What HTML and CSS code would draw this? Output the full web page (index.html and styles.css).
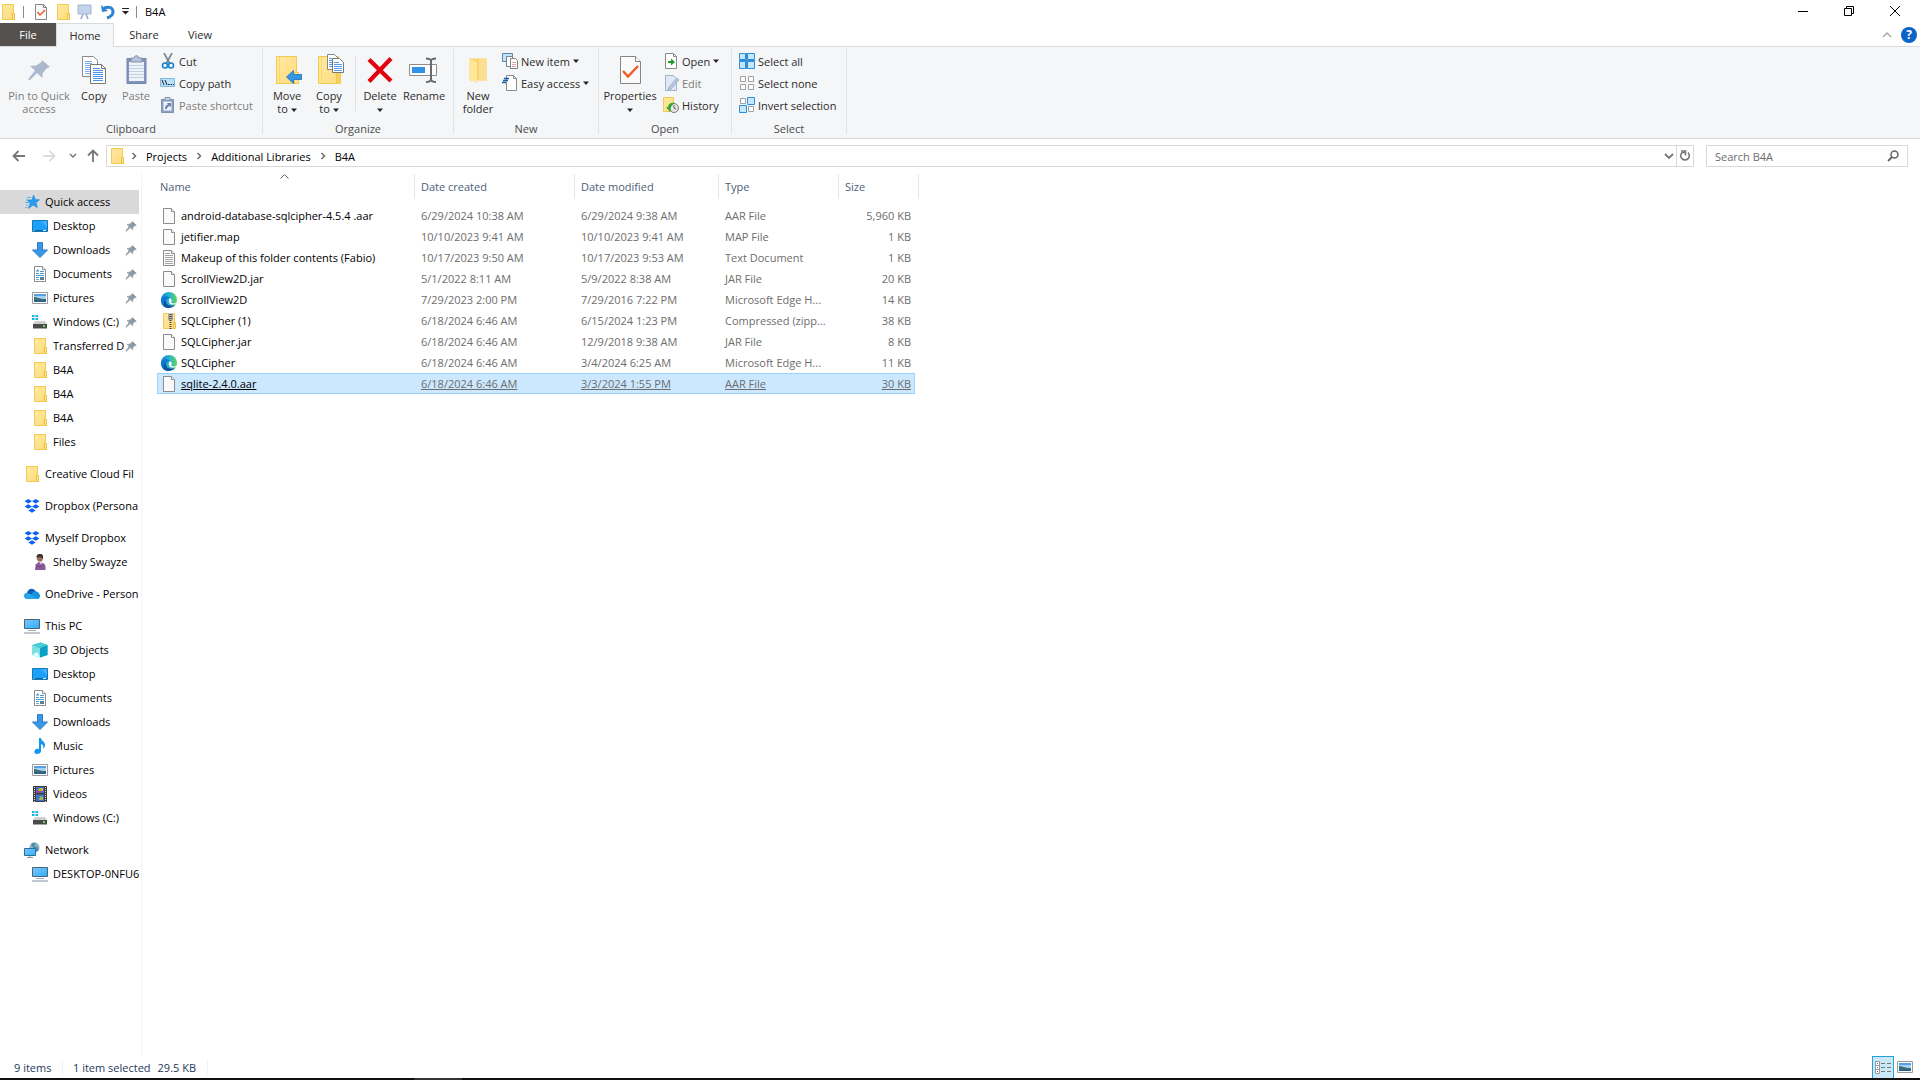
FILE: index.html
```html
<!DOCTYPE html>
<html lang="en">
<head>
<meta charset="utf-8">
<meta name="viewport" content="width=device-width, initial-scale=1">
<title>B4A</title>
<link rel="stylesheet" href="styles.css">
</head>
<body>
<svg class="defs" aria-hidden="true">
  <defs>
    <linearGradient id="g-edge" x1="0" y1="0" x2="1" y2="0"><stop offset="0" stop-color="#0c7fd8"/><stop offset=".5" stop-color="#27b4d4"/><stop offset="1" stop-color="#5fd35a"/></linearGradient>
    <linearGradient id="g-blue" x1="0" y1="0" x2="1" y2="1"><stop offset="0" stop-color="#7cc4fb"/><stop offset="1" stop-color="#2fb0fb"/></linearGradient>
    <linearGradient id="g-folder" x1="0" y1="0" x2="1" y2="1"><stop offset="0" stop-color="#ffe9a2"/><stop offset="1" stop-color="#ffdc7c"/></linearGradient>
  </defs>
  <symbol id="folder" viewBox="0 0 16 16"><path d="M2.500.5h11v15h-11z" fill="url(#g-folder)" stroke="#f1ca52"/><path d="M12.500 9.500h2v6h-2z" fill="#ffe9a2" stroke="#edc13f"/></symbol>
  <symbol id="file" viewBox="0 0 16 16"><path d="M2.500.5h8l3 3v12h-11z" fill="#fafafa" stroke="#8c8c8c"/><path d="M10.500.5v3h3" fill="#fff" stroke="#8c8c8c"/></symbol>
  <symbol id="textfile" viewBox="0 0 16 16"><path d="M2.500.5h8l3 3v12h-11z" fill="#fafafa" stroke="#8c8c8c"/><path d="M10.500.5v3h3" fill="#fff" stroke="#8c8c8c"/><path d="M4 3.500h5M4 5.500h8M4 7.500h8M4 9.500h8M4 11.500h8M4 13.500h8" stroke="#a5a5a5"/></symbol>
  <symbol id="edge" viewBox="0 0 16 16"><circle cx="8" cy="8" r="8" fill="url(#g-edge)"/><path d="M0 7c1-3 7-4 9-1-3 0-5 2-4 5 1 3 4 4 7 3-2 2-7 3-10 0C0 12 0 9 0 7z" fill="#0a78d0"/><path d="M5 8c-1 4 3 7 9 5-3 3-8 4-11 1-1-2 0-5 2-6z" fill="#124f9e"/><path d="M8.500 6.500c2 0 3 2 1.500 4 2 1.500 4 1 5.500-.3-.5 1.800-2.500 2.700-4.500 2.300-3-.5-4-4-2.500-6z" fill="#fff"/></symbol>
  <symbol id="zip" viewBox="0 0 16 16"><path d="M2.500.5h11v15h-11z" fill="url(#g-folder)" stroke="#f1ca52"/><path d="M12.500 9.500h2v6h-2z" fill="#ffe9a2" stroke="#edc13f"/><path d="M7.500 0h4v8h-4z" fill="#c9c9c9"/><path d="M8 1v6M11 1v6" stroke="#777"/><path d="M9.500 1v15" stroke="#444" stroke-width="2" stroke-dasharray="1 1"/></symbol>
  <symbol id="pin" viewBox="0 0 16 16"><path d="M10 2l5 5-2 .5-2.500 2.500-.3 3L7 10l-5.500 5L1 14.500 5.500 9 3 5.800l3-.3L9 3.500z" fill="#8e9aa5" stroke="#8e9aa5"/></symbol>
  <symbol id="quick" viewBox="0 0 16 16"><path d="M9.500 1l1.700 4.500 4.300.3-3.400 2.700 1.100 5L9 11l-4.500 3.500 1.600-5L3.500 6H8z" fill="#2a9df0" stroke="#1382d4" stroke-width=".6"/><path d="M3 3.500h4M2 6h2M1 8.500h4M2 11h2M1.500 13.500h2" stroke="#54b4ee"/></symbol>
  <symbol id="desktop" viewBox="0 0 16 16"><path d="M.5 2.500h15v11H.5z" fill="#1ea0fa" stroke="#1377b8"/><path d="M9 3h6v6z" fill="#3db0ff"/><path d="M1 12.500h14" stroke="#0a6aa8"/><path d="M1.500 12.500h1M11 12.500h3" stroke="#d9efff"/></symbol>
  <symbol id="download" viewBox="0 0 16 16"><path d="M5.500.5h5V8h5L8 15.500.5 8h5z" fill="#3b97e6" stroke="#2a7ec7"/></symbol>
  <symbol id="document" viewBox="0 0 16 16"><path d="M2.500.5h8l3 3v12h-11z" fill="#fff" stroke="#8a8f93"/><path d="M10.500.5v3h3" fill="#fff" stroke="#8a8f93"/><path d="M4 7.500h3M8 5.500h4M8 7.500h4M4 9.500h8M4 11.500h3" stroke="#389ccf"/><path d="M4 5.500h3L6 3z" fill="#3a7ca5"/><path d="M8 11h4v3H8z" fill="#58829c"/><path d="M4 13.500h3" stroke="#8aa"/></symbol>
  <symbol id="picture" viewBox="0 0 16 16"><path d="M.5 2.500h15v11H.5z" fill="#fff" stroke="#9a9a9a"/><path d="M2 4h12v8H2z" fill="#a5d3f7"/><path d="M2 4h12v2H2z" fill="#5a9ee6"/><path d="M2 7c3 0 5 2 12 2v3H2z" fill="#3f706f"/><path d="M2 10c4 1 8 0 12 0v2H2z" fill="#2e5f92"/></symbol>
  <symbol id="drive" viewBox="0 0 16 16"><path d="M0 1h2.500v2H0zM3.500 1H6v2H3.500zM0 4h2.500v2H0zM3.500 4H6v2H3.500z" fill="#13b5ea"/><path d="M3 7h10l2 3H1z" fill="#cfcfcf"/><path d="M1 10h14v4.500H1z" fill="#4a4a4a"/><path d="M11 12h2" stroke="#4be06a" stroke-width="2"/></symbol>
  <symbol id="dropbox" viewBox="0 0 16 16"><path d="M4.300 1L8 3.300 4.300 5.600.5 3.300zM11.700 1l3.800 2.300-3.800 2.300L8 3.300zM4.300 6.200L8 8.500l-3.700 2.300L.5 8.500zM11.700 6.200l3.800 2.300-3.800 2.300L8 8.500zM8 10.200l3.700 2.200L8 14.700l-3.700-2.300z" fill="#0b62fb"/></symbol>
  <symbol id="person" viewBox="0 0 16 16"><path d="M5 1c2-2 6-1 6 2 0 3-1 5-3 5S5 6 4.500 4z" fill="#9a705c"/><path d="M4.500 3C5-.5 10-1 11 2c0 2 0 3-.5 3C9 2 7 4 4.500 3z" fill="#3c3230"/><path d="M3 16c0-3 1-7 4-8l3 1c3 0 4 3 3.500 7z" fill="#8c5a9c"/><path d="M7 7l3 1-1 3z" fill="#e6e0e8"/><path d="M4 10c0 3 3 3 6 2" fill="none" stroke="#694078"/></symbol>
  <symbol id="onedrive" viewBox="0 0 16 16"><path d="M3 7C4 2 10 1 12 6l-5 5H1C-.5 9 1 7 3 7z" fill="#0b5fb5"/><path d="M9 6c3-2 7 1 7 4 0 2-1 3-3 3H4z" fill="#1493e0"/><path d="M1 7.500c4-1 7 1 12 5.500H3C-.5 13-.5 9 1 7.500z" fill="#28a8ea"/></symbol>
  <symbol id="pc" viewBox="0 0 16 16"><path d="M.5 1.500h15v9H.5z" fill="url(#g-blue)" stroke="#4a6478"/><path d="M4 12.500h8" stroke="#9fb0bd"/><path d="M0 15h16" stroke="#8394a5"/></symbol>
  <symbol id="cube" viewBox="0 0 16 16"><path d="M.5 3l8-2.500L15.500 3v10L8 15.500.5 13z" fill="#27bccb"/><path d="M.5 3L8 6v9.500L.5 13z" fill="#7ce0e0"/><path d="M8 6l7.500-3v10L8 15.500z" fill="#0ea0c4"/><path d="M.5 3l8-2.500L15.500 3 8 6z" fill="#49ccd4"/><path d="M.5 13L5 10l3 5.500z" fill="#e8ffff"/></symbol>
  <symbol id="music" viewBox="0 0 16 16"><path d="M7 0h2c0 3 4 3 4 7 0 2-1 3-2 4 1-3 0-4-2-5v7c0 2-2 3-4 3s-3-1-2.500-3S5 10.500 7 11z" fill="#1098f0"/></symbol>
  <symbol id="video" viewBox="0 0 16 16"><path d="M1 0h14v16H1z" fill="#3b3b3b"/><path d="M2.500 1v15M13.500 1v15" stroke="#ddd" stroke-dasharray="1 1"/><path d="M4 1h8v6H4zM4 8.500h8V15H4z" fill="#3b76cc"/><path d="M7 2h4v3H6z" fill="#d8a833"/><path d="M4 5h5v2H4z" fill="#a7418d"/><path d="M8 10l3 1v3H7z" fill="#a4b641"/></symbol>
  <symbol id="network" viewBox="0 0 16 16"><circle cx="10.500" cy="5.500" r="5" fill="#8fb2c4"/><path d="M7 2c2-2 4-1 5-1L10 4l3 1 2 3-3 2z" fill="#4f89a8"/><path d="M.5 6.500h11v7H.5z" fill="url(#g-blue)" stroke="#286fa0"/><path d="M3 15.500h6M6 14v1" stroke="#8394a5"/></symbol>
  <symbol id="checkdoc" viewBox="0 0 16 16"><path d="M2.500.5h8l3 3v12h-11z" fill="#fafafa" stroke="#858585"/><path d="M10.500.5v3h3" fill="none" stroke="#858585"/><path d="M4.500 8l2.500 3 5-5" fill="none" stroke="#ec5a24" stroke-width="1.500"/></symbol>
  <symbol id="chev-r" viewBox="0 0 8 8"><path d="M2.500 1l3 3-3 3" fill="none" stroke="#6d6d6d" stroke-width="1.500"/></symbol>
  <symbol id="caret" viewBox="0 0 6 4"><path d="M0 .5h6L3 4z" fill="#222"/></symbol>
  <symbol id="copy" viewBox="0 0 32 32"><path d="M4.500 2.500h11l4 4v16h-15z" fill="#fff" stroke="#8a8a8a"/><path d="M7 7.500h7M7 9.500h7M7 11.500h7M7 13.500h7M7 15.500h7M7 17.500h7M7 19.500h7" stroke="#79aef0"/><path d="M12.500 10.500h11l4 4v15h-15z" fill="#fff" stroke="#777"/><path d="M23.500 10.500v4h4" fill="none" stroke="#777"/><path d="M15 14.500h7M15 16.500h10M15 18.500h10M15 20.500h10M15 22.500h10M15 24.500h10M15 26.500h10" stroke="#4b92f0"/></symbol>
</svg>

<header class="titlebar">
  <div class="quickbar">
    <svg class="ic"><use href="#folder"/></svg>
    <span class="bar"></span>
    <button class="qbtn" aria-label="Properties"><svg class="ic"><use href="#checkdoc"/></svg></button>
    <button class="qbtn" aria-label="New folder"><svg class="ic"><use href="#folder"/></svg></button>
    <button class="qbtn" aria-label="Slide show"><svg class="ic" viewBox="0 0 16 16"><path d="M1 1h13v9H1z" fill="#c3d3ea" stroke="#a3b5d1"/><path d="M6 10l-2 5M9 10l2 5" stroke="#95a8c5" stroke-width="1.500"/></svg></button>
    <button class="qbtn" aria-label="Undo"><svg class="ic" viewBox="0 0 16 16"><path d="M5 4c6-2 9 0 9 4 0 3-3 5-6 6" fill="none" stroke="#2b83d2" stroke-width="3"/><path d="M2 1l1 7 6-1z" fill="#2b83d2"/></svg></button>
    <button class="qbtn small" aria-label="Customize"><svg viewBox="0 0 7 7" width="7" height="7"><path d="M0 .5h7" stroke="#222"/><path d="M0 3h7L3.500 6.500z" fill="#222"/></svg></button>
    <span class="bar"></span>
  </div>
  <h1 class="title">B4A</h1>
  <div class="winbtns">
    <button aria-label="Minimize"><svg viewBox="0 0 10 10" width="10" height="10"><path d="M0 5.500h10" stroke="#000"/></svg></button>
    <button aria-label="Restore"><svg viewBox="0 0 10 10" width="10" height="10"><path d="M.5 2.500h7v7h-7zM2.500 2.500v-2h7v7h-2" fill="none" stroke="#000"/></svg></button>
    <button aria-label="Close"><svg viewBox="0 0 10 10" width="10" height="10"><path d="M0 0l10 10M10 0L0 10" stroke="#000"/></svg></button>
  </div>
</header>

<nav class="tabs">
  <button class="tab file">File</button>
  <button class="tab home">Home</button>
  <button class="tab share">Share</button>
  <button class="tab view">View</button>
  <div class="tabtools">
    <button aria-label="Collapse ribbon"><svg viewBox="0 0 10 6" width="10" height="6"><path d="M1 5l4-4 4 4" fill="none" stroke="#a5a5a5" stroke-width="1.300"/></svg></button>
    <button class="help" aria-label="Help">?</button>
  </div>
</nav>

<section class="ribbon">
  <div class="group clipboard">
    <div class="tools">
      <button class="big pinbtn off"><svg class="bi" viewBox="0 0 32 32"><path d="M19 6l8 7-3.500 1.500-4 5V24l-5.500-5L7 26l-2-.5 7-9-5-4.500 6-.5 5-3z" fill="#a9b8cd"/></svg><span>Pin to Quick<br>access</span></button>
      <button class="big"><svg class="bi"><use href="#copy"/></svg><span>Copy</span></button>
      <button class="big off"><svg class="bi" viewBox="0 0 32 32"><path d="M7 4.500h19v25H7z" fill="#8195bb" stroke="#7486aa"/><path d="M9 8h15v19H9z" fill="#eef3fa"/><path d="M9 11.500h15M9 14.500h15M9 17.500h15M9 20.500h15M9 23.500h15" stroke="#c2d0e4"/><path d="M11 4h3c0-3 5-3 5 0h3v4H11z" fill="#b7c3d5" stroke="#8393ae"/></svg><span>Paste</span></button>
      <div class="smalls">
        <button class="sm"><svg class="ic" viewBox="0 0 16 16"><path d="M4 0l6 11M12 0L6 11" stroke="#75808c" stroke-width="1.600"/><circle cx="5" cy="12.500" r="2.500" fill="none" stroke="#1885cf" stroke-width="1.600"/><circle cx="11" cy="12.500" r="2.500" fill="none" stroke="#1885cf" stroke-width="1.600"/></svg>Cut</button>
        <button class="sm"><svg class="ic" viewBox="0 0 16 16"><path d="M.5 3.500h14v8H.5z" fill="#b9e1fb" stroke="#7db8dd"/><path d="M2 5l2 5M5 5l2 5M8 9.500h1.500M10.500 9.500H12M13 9.500h1" stroke="#222"/></svg>Copy path</button>
        <button class="sm off"><svg class="ic" viewBox="0 0 16 16"><path d="M1.500 2.500h12v13h-12z" fill="#8da0c2" stroke="#7e90b2"/><path d="M3.500 4.500h8v9h-8z" fill="#eef3fa"/><path d="M5 .5h5v3H5z" fill="#c3cddd" stroke="#8696b0"/><path d="M5 12c0-3 1-4 3-4.500L7 6h4v4L9.500 9C8 9.500 7 10.500 7 12z" fill="#6d84b0"/></svg>Paste shortcut</button>
      </div>
    </div>
    <h2>Clipboard</h2>
  </div>
  <div class="group organize">
    <div class="tools">
      <button class="big"><svg class="bi" viewBox="0 0 32 32"><path d="M5.500 2.500h20v27h-20z" fill="url(#g-folder)" stroke="#efc952"/><path d="M8.500 3v26" stroke="#f7d878"/><path d="M23.500 18.500h4v11h-4z" fill="#ffe9a2" stroke="#efc952"/><path d="M15.500 23l7-6.500v4h8v5h-8v4z" fill="#3896e6" stroke="#2b7fc8"/></svg><span>Move<br>to <svg class="ct"><use href="#caret"/></svg></span></button>
      <button class="big"><svg class="bi" viewBox="0 0 32 32"><path d="M5.500 2.500h20v27h-20z" fill="url(#g-folder)" stroke="#efc952"/><path d="M8.500 3v26" stroke="#f7d878"/><path d="M23.500 18.500h4v11h-4z" fill="#f7cf5c" stroke="#efc952"/><path d="M14.500.5h7l3 3v12h-10z" fill="#fff" stroke="#888"/><path d="M19.500 4.500h7l4 4v10h-11z" fill="#fff" stroke="#777"/><path d="M21 8.500h5M21 10.500h8M21 12.500h8M21 14.500h8M21 16.500h8M16 4.500h3M16 6.500h3M16 8.500h3M16 10.500h3M16 12.500h3" stroke="#559bf0"/></svg><span>Copy<br>to <svg class="ct"><use href="#caret"/></svg></span></button>
      <i class="split"></i>
      <button class="big"><svg class="bi" viewBox="0 0 32 32"><path d="M5 5.500L27 27M27 4.500L5 27.500" stroke="#e3000f" stroke-width="4.200"/></svg><span>Delete<br><svg class="ct"><use href="#caret"/></svg></span></button>
      <button class="big rename"><svg class="bi" viewBox="0 0 32 32"><path d="M1.500 10.500h27v11h-27z" fill="#fff" stroke="#8c8c8c"/><path d="M4 13h13v6H4z" fill="#2f93e8"/><path d="M18 4.500c3 0 5 .5 5 2.500v18c0 2-2 3-5 3M28 4.500c-3 0-5 .5-5 2.500v18c0 2 2 3 5 3" fill="none" stroke="#6b6b6b" stroke-width="2"/></svg><span>Rename</span></button>
    </div>
    <h2>Organize</h2>
  </div>
  <div class="group new">
    <div class="tools">
      <button class="big"><svg class="bi" viewBox="0 0 32 32"><path d="M8 4.500h17v22H8z" fill="#fbd36b"/><path d="M17 4.500h8v22h-8z" fill="#fbe094"/><path d="M7 4.500l8 4v21L7 25z" fill="#ffe69a"/></svg><span>New<br>folder</span></button>
      <div class="smalls">
        <button class="sm"><svg class="ic" viewBox="0 0 16 16"><path d="M.5.5h10v8H.5z" fill="#c5e2f6" stroke="#5787a6"/><path d="M4.500 3.500h6v10h-6z" fill="#fff" stroke="#6f8795"/><path d="M8.500 5.500h5l2 2v8h-7z" fill="#fff" stroke="#808080"/><path d="M10 9.500h4M10 11.500h4M10 13.500h4" stroke="#e0a5a5"/></svg>New item <svg class="ct"><use href="#caret"/></svg></button>
        <button class="sm"><svg class="ic" viewBox="0 0 16 16"><path d="M4.500.5h7l3 3v12h-10z" fill="#fff" stroke="#8a8a8a"/><path d="M11.500.5v3h3" fill="none" stroke="#8a8a8a"/><path d="M2 3.500h5M1 5.500h5M0 7.500h4" stroke="#1b62ab" stroke-width="1.300"/></svg>Easy access <svg class="ct"><use href="#caret"/></svg></button>
      </div>
    </div>
    <h2>New</h2>
  </div>
  <div class="group open">
    <div class="tools">
      <button class="big props"><svg class="bi" viewBox="0 0 32 32"><path d="M6.500 2.500h15l5 5v22h-20z" fill="#fafafa" stroke="#858585"/><path d="M21.500 2.500v5h5" fill="#fff" stroke="#858585"/><path d="M9 17l5 5.500L24 12" fill="none" stroke="#f0591f" stroke-width="2.400"/></svg><span>Properties<br><svg class="ct"><use href="#caret"/></svg></span></button>
      <div class="smalls">
        <button class="sm"><svg class="ic" viewBox="0 0 16 16"><path d="M2.500.5h8l3 3v12h-11z" fill="#fff" stroke="#8a8a8a"/><path d="M10.500.5v3h3" fill="none" stroke="#8a8a8a"/><path d="M5 8h3V5.500L12 9l-4 3.500V10H5z" fill="#1b9e26"/></svg>Open <svg class="ct"><use href="#caret"/></svg></button>
        <button class="sm off"><svg class="ic" viewBox="0 0 16 16"><path d="M2.500.5h8l3 3v12h-11z" fill="#dfe8f4" stroke="#a3b3cd"/><path d="M14 3l2 2-8 9-3 1 1-3z" fill="#b5c6e0" stroke="#8fa4c6" stroke-width=".7"/></svg>Edit</button>
        <button class="sm"><svg class="ic" viewBox="0 0 16 16"><path d="M.5.5h10v14H.5z" fill="url(#g-folder)" stroke="#f1ca52"/><circle cx="11" cy="11" r="4.500" fill="#e3e3e3" stroke="#7b7b7b"/><path d="M11 8v3l2 1" fill="none" stroke="#666"/><path d="M3 10l4 5 1-2c-1-3 1-5 4-7-4-1-7 1-7 4z" fill="#35a839"/></svg>History</button>
      </div>
    </div>
    <h2>Open</h2>
  </div>
  <div class="group select">
    <div class="tools">
      <div class="smalls">
        <button class="sm"><svg class="ic" viewBox="0 0 16 16"><path d="M.5.5h6v6h-6zM8.500.5h7v6h-7zM.5 8.500h6v7h-6zM8.500 8.500h7v7h-7z" fill="#c6e6fb" stroke="#2d8fdc"/><path d="M7.500 0v16M0 7.500h16" stroke="#2d8fdc"/></svg>Select all</button>
        <button class="sm"><svg class="ic" viewBox="0 0 16 16"><path d="M1.500 1.500h5v5h-5zM9.500 1.500h5v5h-5zM1.500 9.500h5v5h-5zM9.500 9.500h5v5h-5z" fill="#fff" stroke="#a0a0a0"/></svg>Select none</button>
        <button class="sm"><svg class="ic" viewBox="0 0 16 16"><path d="M1.500 1.500h5v5h-5zM9.500 9.500h5v5h-5z" fill="#fff" stroke="#a0a0a0"/><path d="M8.500.5h7v7h-7zM.5 8.500h7v7h-7z" fill="#c6e6fb" stroke="#2d8fdc"/></svg>Invert selection</button>
      </div>
    </div>
    <h2>Select</h2>
  </div>
</section>

<section class="addressrow">
  <div class="navbtns">
    <button aria-label="Back"><svg viewBox="0 0 14 12" width="14" height="12"><path d="M13 6H2M6.500 1L1.500 6l5 5" fill="none" stroke="#777" stroke-width="1.800"/></svg></button>
    <button aria-label="Forward"><svg viewBox="0 0 14 12" width="14" height="12"><path d="M1 6h11M7.500 1l5 5-5 5" fill="none" stroke="#d5d5d5" stroke-width="1.500"/></svg></button>
    <button class="recent" aria-label="Recent locations"><svg viewBox="0 0 8 6" width="8" height="6"><path d="M1 1l3 3 3-3" fill="none" stroke="#777" stroke-width="1.500"/></svg></button>
    <button class="up" aria-label="Up"><svg viewBox="0 0 12 14" width="12" height="14"><path d="M6 13V2M1 6.500L6 1.500l5 5" fill="none" stroke="#777" stroke-width="1.800"/></svg></button>
  </div>
  <div class="address">
    <svg class="ic"><use href="#folder"/></svg>
    <svg class="cr"><use href="#chev-r"/></svg><a href="#">Projects</a>
    <svg class="cr"><use href="#chev-r"/></svg><a href="#">Additional Libraries</a>
    <svg class="cr"><use href="#chev-r"/></svg><a href="#">B4A</a>
    <button class="history" aria-label="Previous locations"><svg viewBox="0 0 10 8" width="10" height="8"><path d="M1 2l4 4 4-4" fill="none" stroke="#777" stroke-width="1.800"/></svg></button>
    <button class="refresh" aria-label="Refresh"><svg viewBox="0 0 12 12" width="12" height="12"><path d="M9 2.500a4.300 4.300 0 1 1-6 0h3.500" fill="none" stroke="#777" stroke-width="1.600"/><path d="M2 1h4.500v4.500" fill="none" stroke="#777" stroke-width="1.600"/></svg></button>
  </div>
  <form class="search">
    <input type="search" aria-label="Search B4A" placeholder="Search B4A">
    <button aria-label="Search"><svg viewBox="0 0 12 12" width="12" height="12"><circle cx="7.500" cy="4.500" r="3.500" fill="none" stroke="#666" stroke-width="1.500"/><path d="M5 7l-4 4" stroke="#666" stroke-width="1.800"/></svg></button>
  </form>
</section>

<main class="body">
  <nav class="side">
    <ul>
      <li><a class="root current" href="#"><svg class="ic"><use href="#quick"/></svg><span>Quick access</span></a></li>
      <li><a href="#"><svg class="ic"><use href="#desktop"/></svg><span>Desktop</span><svg class="pin"><use href="#pin"/></svg></a></li>
      <li><a href="#"><svg class="ic"><use href="#download"/></svg><span>Downloads</span><svg class="pin"><use href="#pin"/></svg></a></li>
      <li><a href="#"><svg class="ic"><use href="#document"/></svg><span>Documents</span><svg class="pin"><use href="#pin"/></svg></a></li>
      <li><a href="#"><svg class="ic"><use href="#picture"/></svg><span>Pictures</span><svg class="pin"><use href="#pin"/></svg></a></li>
      <li><a href="#"><svg class="ic"><use href="#drive"/></svg><span>Windows (C:)</span><svg class="pin"><use href="#pin"/></svg></a></li>
      <li><a href="#"><svg class="ic"><use href="#folder"/></svg><span>Transferred D</span><svg class="pin"><use href="#pin"/></svg></a></li>
      <li><a href="#"><svg class="ic"><use href="#folder"/></svg><span>B4A</span></a></li>
      <li><a href="#"><svg class="ic"><use href="#folder"/></svg><span>B4A</span></a></li>
      <li><a href="#"><svg class="ic"><use href="#folder"/></svg><span>B4A</span></a></li>
      <li><a href="#"><svg class="ic"><use href="#folder"/></svg><span>Files</span></a></li>
    </ul>
    <ul>
      <li><a class="root" href="#"><svg class="ic"><use href="#folder"/></svg><span>Creative Cloud Fil</span></a></li>
    </ul>
    <ul>
      <li><a class="root" href="#"><svg class="ic"><use href="#dropbox"/></svg><span>Dropbox (Persona</span></a></li>
    </ul>
    <ul>
      <li><a class="root" href="#"><svg class="ic"><use href="#dropbox"/></svg><span>Myself Dropbox</span></a></li>
      <li><a href="#"><svg class="ic"><use href="#person"/></svg><span>Shelby Swayze</span></a></li>
    </ul>
    <ul>
      <li><a class="root" href="#"><svg class="ic"><use href="#onedrive"/></svg><span>OneDrive - Person</span></a></li>
    </ul>
    <ul>
      <li><a class="root" href="#"><svg class="ic"><use href="#pc"/></svg><span>This PC</span></a></li>
      <li><a href="#"><svg class="ic"><use href="#cube"/></svg><span>3D Objects</span></a></li>
      <li><a href="#"><svg class="ic"><use href="#desktop"/></svg><span>Desktop</span></a></li>
      <li><a href="#"><svg class="ic"><use href="#document"/></svg><span>Documents</span></a></li>
      <li><a href="#"><svg class="ic"><use href="#download"/></svg><span>Downloads</span></a></li>
      <li><a href="#"><svg class="ic"><use href="#music"/></svg><span>Music</span></a></li>
      <li><a href="#"><svg class="ic"><use href="#picture"/></svg><span>Pictures</span></a></li>
      <li><a href="#"><svg class="ic"><use href="#video"/></svg><span>Videos</span></a></li>
      <li><a href="#"><svg class="ic"><use href="#drive"/></svg><span>Windows (C:)</span></a></li>
    </ul>
    <ul>
      <li><a class="root" href="#"><svg class="ic"><use href="#network"/></svg><span>Network</span></a></li>
      <li><a href="#"><svg class="ic"><use href="#pc"/></svg><span>DESKTOP-0NFU6</span></a></li>
    </ul>
  </nav>
  <section class="files">
    <table>
      <colgroup><col class="c-name"><col class="c-created"><col class="c-modified"><col class="c-type"><col class="c-size"></colgroup>
      <thead>
        <tr><th class="sorted">Name<svg class="sort" viewBox="0 0 9 5"><path d="M.5 4.500l4-4 4 4" fill="none" stroke="#666"/></svg></th><th>Date created</th><th>Date modified</th><th>Type</th><th>Size</th></tr>
      </thead>
      <tbody>
        <tr><td><svg class="ic"><use href="#file"/></svg>android-database-sqlcipher-4.5.4 .aar</td><td>6/29/2024 10:38 AM</td><td>6/29/2024 9:38 AM</td><td>AAR File</td><td>5,960 KB</td></tr>
        <tr><td><svg class="ic"><use href="#file"/></svg>jetifier.map</td><td>10/10/2023 9:41 AM</td><td>10/10/2023 9:41 AM</td><td>MAP File</td><td>1 KB</td></tr>
        <tr><td><svg class="ic"><use href="#textfile"/></svg>Makeup of this folder contents (Fabio)</td><td>10/17/2023 9:50 AM</td><td>10/17/2023 9:53 AM</td><td>Text Document</td><td>1 KB</td></tr>
        <tr><td><svg class="ic"><use href="#file"/></svg>ScrollView2D.jar</td><td>5/1/2022 8:11 AM</td><td>5/9/2022 8:38 AM</td><td>JAR File</td><td>20 KB</td></tr>
        <tr><td><svg class="ic"><use href="#edge"/></svg>ScrollView2D</td><td>7/29/2023 2:00 PM</td><td>7/29/2016 7:22 PM</td><td>Microsoft Edge H...</td><td>14 KB</td></tr>
        <tr><td><svg class="ic"><use href="#zip"/></svg>SQLCipher (1)</td><td>6/18/2024 6:46 AM</td><td>6/15/2024 1:23 PM</td><td>Compressed (zipp...</td><td>38 KB</td></tr>
        <tr><td><svg class="ic"><use href="#file"/></svg>SQLCipher.jar</td><td>6/18/2024 6:46 AM</td><td>12/9/2018 9:38 AM</td><td>JAR File</td><td>8 KB</td></tr>
        <tr><td><svg class="ic"><use href="#edge"/></svg>SQLCipher</td><td>6/18/2024 6:46 AM</td><td>3/4/2024 6:25 AM</td><td>Microsoft Edge H...</td><td>11 KB</td></tr>
        <tr class="selected"><td><svg class="ic"><use href="#file"/></svg><u>sqlite-2.4.0.aar</u></td><td><u>6/18/2024 6:46 AM</u></td><td><u>3/3/2024 1:55 PM</u></td><td><u>AAR File</u></td><td><u>30 KB</u></td></tr>
      </tbody>
    </table>
  </section>
</main>

<footer class="status">
  <span class="count">9 items</span>
  <span class="sel">1 item selected</span>
  <span class="size">29.5 KB</span>
  <div class="views">
    <button class="on" aria-label="Details view"><svg viewBox="0 0 16 14" width="16" height="14"><path d="M.5.5h4v12h-4zM.5 4.500h4M.5 8.500h4" fill="#fff" stroke="#999"/><path d="M2 2.500h1M2 6.500h1" stroke="#3c82c8"/><path d="M2 10.500h1" stroke="#c33"/><path d="M6 2.500h4M12 2.500h4M6 6.500h4M12 6.500h4M6 10.500h4M12 10.500h4" stroke="#777"/></svg></button>
    <button aria-label="Large icons view"><svg class="ic"><use href="#picture"/></svg></button>
  </div>
</footer>
<div class="taskbar"><span></span></div>
</body>
</html>
```
FILE: styles.css
```css
* { box-sizing: border-box; }
html, body { margin: 0; }
body {
  display: flex;
  flex-direction: column;
  min-height: 100vh;
  background: #fff;
  color: #000;
  font-family: "Open Sans", "Noto Sans", sans-serif;
  font-size: 11px;
  line-height: 13px;
}
button {
  display: flex;
  align-items: center;
  justify-content: center;
  margin: 0;
  padding: 0;
  border: 0;
  background: none;
  color: inherit;
  font: inherit;
}
a { color: inherit; text-decoration: none; }
h1, h2 { margin: 0; font-size: inherit; font-weight: 400; }
svg { display: block; flex: none; }
.defs { position: absolute; width: 0; height: 0; }
.ic { width: 16px; height: 16px; }

/* Title bar */
.titlebar { display: flex; align-items: center; height: 23px; }
.quickbar { display: flex; align-items: center; gap: 6px; }
.bar { width: 1px; height: 12px; margin: 0 3px 0 1px; background: #8c8c8c; }
.qbtn { width: 16px; height: 16px; }
.qbtn.small { width: 8px; }
.title { flex: 1; padding-left: 5px; }
.winbtns { display: flex; height: 100%; padding-right: 2px; }
.winbtns button { width: 46px; height: 21px; }

/* Tabs */
.tabs { display: flex; height: 24px; border-bottom: 1px solid #dadbdc; color: #2b2b2b; }
.tab { height: 23px; }
.file { width: 56px; background: #54504e; color: #fff; }
.home { width: 58px; height: 24px; border: 1px solid #dadbdc; border-bottom: 0; background: #f5f6f7; }
.share { width: 60px; }
.view { width: 52px; }
.tabtools { display: flex; flex: 1; align-items: center; justify-content: flex-end; gap: 9px; padding-right: 3px; }
.help { width: 16px; height: 16px; border-radius: 8px; background: #0a64c8; color: #fff; font-size: 12px; font-weight: 700; }

/* Ribbon */
.ribbon { display: flex; height: 92px; padding: 2px 0 4px; border-bottom: 1px solid #dadbdc; background: #f5f6f7; color: #2b2b2b; }
.group { display: flex; flex-direction: column; justify-content: space-between; border-right: 1px solid #e2e3e4; }
.group h2 { text-align: center; line-height: 10px; color: #4a4a4a; }
.tools { display: flex; }
.clipboard { width: 263px; }
.clipboard .tools { padding-left: 5px; }
.organize { width: 191px; }
.organize .tools { padding-left: 3px; }
.new { width: 145px; }
.new .tools { padding-left: 3px; }
.open { width: 133px; }
.open .tools { padding-left: 5px; }
.select { width: 115px; }
.select .tools { padding-left: 4px; }
.big { flex-direction: column; justify-content: flex-start; width: 42px; padding-top: 5px; white-space: nowrap; }
.bi { width: 32px; height: 32px; margin-bottom: 3px; }
.pinbtn { width: 68px; }
.rename { width: 46px; }
.props { width: 52px; margin-right: 4px; }
.off { color: #7d7d7d; }
.smalls { padding: 1px 0 0 3px; }
.sm { justify-content: flex-start; gap: 3px; height: 22px; white-space: nowrap; }
.ct { display: inline-block; width: 6px; height: 4px; vertical-align: middle; }
.split { width: 1px; height: 55px; margin: 7px 3px 0 5px; background: #dfe0e1; }

/* Address row */
.addressrow { display: flex; align-items: center; height: 34px; padding: 0 12px 0 12px; }
.navbtns { display: flex; align-items: center; gap: 16px; width: 94px; }
.recent { width: 8px; margin-left: -3px; }
.up { margin-left: -6px; }
.address { display: flex; flex: 1; align-items: center; height: 22px; margin-right: 12px; padding-left: 2px; border: 1px solid #d9d9d9; }
.address .ic { margin-right: -2px; }
.cr { width: 8px; height: 8px; margin: 0 8px 0 7px; }
.address a { padding-right: 1px; }
.history { width: 14px; height: 20px; margin-left: auto; }
.refresh { width: 17px; height: 20px; border-left: 1px solid #d9d9d9; }
.search { display: flex; align-items: center; width: 202px; height: 22px; margin: 0; padding: 0 8px; border: 1px solid #d9d9d9; }
.search input { flex: 1; min-width: 0; padding: 0; border: 0; outline: 0; background: none; font: inherit; }
.search input::placeholder { color: #6d6d6d; opacity: 1; }

/* Navigation pane */
.body { display: flex; flex: 1; }
.side { width: 142px; padding: 17px 2px 0 0; border-right: 1px solid #f3f3f3; }
.side ul { margin: 0 0 8px; padding: 0; list-style: none; }
.side a { display: flex; align-items: center; gap: 5px; height: 24px; padding-left: 32px; overflow: hidden; white-space: nowrap; }
.side .root { padding-left: 24px; }
.side .current { background: #d9d9d9; }
.side span { flex: 1; min-width: 0; line-height: 18px; }
.pin { width: 12px; height: 12px; margin-right: 2px; }
.side span:not(:last-child) { margin-right: -3px; }

/* File list */
.files { flex: 1; padding: 1px 0 0 15px; }
table { width: 758px; border-collapse: separate; border-spacing: 0; table-layout: fixed; }
.c-name { width: 258px; }
.c-created { width: 160px; }
.c-modified { width: 144px; }
.c-type { width: 120px; }
th { position: relative; height: 25px; padding: 0 6px; border-right: 1px solid #e5e5e5; color: #4c607a; font-weight: 400; text-align: left; }
th:first-child { padding-left: 3px; }
th:last-child { border-right: 0; }
th:last-child::after { content: ""; position: absolute; top: 0; right: -4px; width: 1px; height: 25px; background: #e5e5e5; }
.sort { position: absolute; top: 0; left: 123px; width: 9px; height: 5px; }
thead::after { content: ""; display: block; height: 6px; }
td { height: 21px; padding: 0 4px 0 6px; color: #6d6d6d; white-space: nowrap; }
td:first-child { padding-left: 4px; color: #000; }
td .ic { display: inline-block; margin-right: 4px; vertical-align: -4px; }
td:last-child { text-align: right; }
.selected { outline: 1px solid #99d1ff; outline-offset: -1px; background: #cce8ff; }

/* Status bar */
.status { display: flex; align-items: center; height: 22px; padding: 0 5px 0 14px; color: #1e395b; }
.count { width: 49px; border-right: 1px solid #f0f0f0; }
.sel { padding-left: 10px; }
.size { width: 50px; margin-left: 7px; border-right: 1px solid #f0f0f0; }
.views { display: flex; gap: 1px; margin-left: auto; }
.views button { width: 20px; height: 22px; }
.views .on { width: 22px; border: 1px solid #26a0da; border-bottom: 0; background: #cbe8f6; }
.taskbar { height: 2px; padding-left: 414px; background: #101010; }
.taskbar span { display: block; width: 48px; height: 2px; background: #333; }
```
